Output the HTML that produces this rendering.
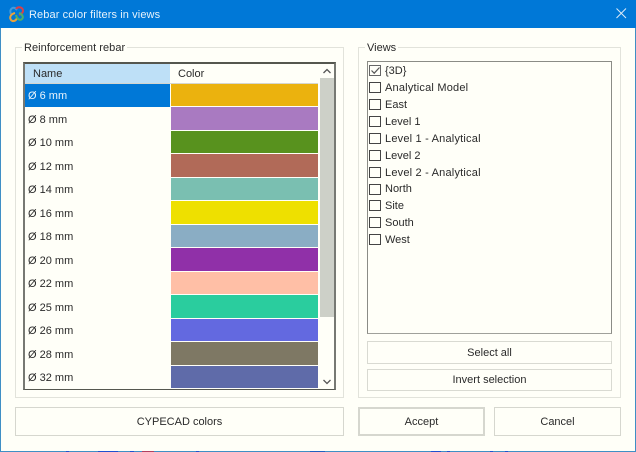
<!DOCTYPE html>
<html>
<head>
<meta charset="utf-8">
<style>
html,body{margin:0;padding:0;}
body{width:636px;height:452px;overflow:hidden;position:relative;background:#FFFFF8;font-family:"Liberation Sans",sans-serif;font-size:11px;color:#2a2a2a;}
.a{position:absolute;box-sizing:border-box;}
.t{position:absolute;white-space:nowrap;line-height:14px;height:14px;}
.btn{position:absolute;box-sizing:border-box;border:1px solid #D9DAD2;text-align:center;background:#FFFFF8;}
.row{position:absolute;left:171px;width:147px;}
.cb{position:absolute;left:369px;width:12px;height:11px;box-sizing:border-box;border:1px solid #444;background:#FFFFF8;}
.r{position:absolute;top:451px;height:1px;}
</style>
</head>
<body>
<div class="a" style="left:0;top:0;width:636px;height:28px;background:#0078D7"></div>
<div class="a" style="left:0;top:28px;width:1px;height:424px;background:#3F8FC5"></div>
<div class="a" style="right:0;top:28px;width:1px;height:424px;background:#3F8FC5"></div>
<div class="a" style="left:0;top:451px;width:636px;height:1px;background:#3F8FC5"></div>
<div class="r" style="left:66px;width:3px;background:#1E50D0"></div>
<div class="r" style="left:98px;width:20px;background:#1E50D0"></div>
<div class="r" style="left:130px;width:4px;background:#1E50D0"></div>
<div class="r" style="left:142px;width:12px;background:#B04060"></div>
<div class="r" style="left:196px;width:3px;background:#1E50D0"></div>
<div class="r" style="left:310px;width:15px;background:#1E60C0"></div>
<div class="r" style="left:431px;width:10px;background:#1E50D0"></div>
<div class="r" style="left:447px;width:3px;background:#1E50D0"></div>
<div class="r" style="left:490px;width:3px;background:#1E50D0"></div>
<div class="r" style="left:505px;width:3px;background:#1E50D0"></div>
<svg class="a" style="left:8px;top:5px" width="17" height="18" viewBox="0 0 17 18" fill="none" stroke-width="2">
<path d="M3 9 C1 5 4 2 7 3 L9 5" stroke="#3F9BE0"/>
<path d="M8 4 C10 1 15 2 15 6 C15 8 13 9 11 10" stroke="#D8404A"/>
<path d="M7 8 C3 9 1 12 3 15 C5 17 8 16 9 13" stroke="#E9A23B"/>
<path d="M8 10 C9 14 12 16 14 14 C16 12 14 9 11 8" stroke="#4CAF6A"/>
</svg>
<div class="t" style="left:29px;top:8px;color:#E6F2FB;font-size:11px;letter-spacing:.1px">Rebar color filters in views</div>
<svg class="a" style="left:616px;top:8px" width="11" height="11" viewBox="0 0 11 11"><path d="M.5.5L10 10M10 .5L.5 10" stroke="#DCEBF7" stroke-width="1"/></svg>

<!-- left group -->
<div class="a" style="left:15px;top:47px;width:329px;height:351px;border:1px solid #E2E3DB"></div>
<div class="t" style="left:22px;top:41px;background:#FFFFF8;padding:0 2px 0 2px;letter-spacing:.05px">Reinforcement rebar</div>
<div class="a" style="left:23px;top:62px;width:313px;height:328px;border:2px solid #777973;border-top-color:#55574F;border-bottom-width:1px;border-bottom-color:#55574F"></div>
<div class="a" style="left:25px;top:64px;width:145px;height:19px;background:#BEE0F7"></div>
<div class="a" style="left:25px;top:83px;width:293px;height:1px;background:#D5D6CF"></div>
<div class="t" style="left:33px;top:67px">Name</div>
<div class="t" style="left:178px;top:67px">Color</div>

<div class="a" style="left:25px;top:84px;width:145px;height:23px;background:#0078D7"></div>
<div class="row" style="top:84px;height:22px;background:#EBB20E"></div>
<div class="row" style="top:107px;height:23px;background:#A97AC1"></div>
<div class="row" style="top:131px;height:22px;background:#58921E"></div>
<div class="row" style="top:154px;height:23px;background:#B16A58"></div>
<div class="row" style="top:178px;height:22px;background:#7ABFB1"></div>
<div class="row" style="top:201px;height:23px;background:#EEE000"></div>
<div class="row" style="top:225px;height:22px;background:#8AADC4"></div>
<div class="row" style="top:248px;height:23px;background:#9030A8"></div>
<div class="row" style="top:272px;height:22px;background:#FFBFA6"></div>
<div class="row" style="top:295px;height:23px;background:#2ACD9E"></div>
<div class="row" style="top:319px;height:22px;background:#6369E0"></div>
<div class="row" style="top:342px;height:23px;background:#7E7864"></div>
<div class="row" style="top:366px;height:22px;background:#5F6BA9"></div>

<div class="t" style="left:28px;top:89px;color:#EAF4FC">Ø 6 mm</div>
<div class="t" style="left:28px;top:113px">Ø 8 mm</div>
<div class="t" style="left:28px;top:136px">Ø 10 mm</div>
<div class="t" style="left:28px;top:160px">Ø 12 mm</div>
<div class="t" style="left:28px;top:183px">Ø 14 mm</div>
<div class="t" style="left:28px;top:207px">Ø 16 mm</div>
<div class="t" style="left:28px;top:230px">Ø 18 mm</div>
<div class="t" style="left:28px;top:254px">Ø 20 mm</div>
<div class="t" style="left:28px;top:277px">Ø 22 mm</div>
<div class="t" style="left:28px;top:301px">Ø 25 mm</div>
<div class="t" style="left:28px;top:324px">Ø 26 mm</div>
<div class="t" style="left:28px;top:348px">Ø 28 mm</div>
<div class="t" style="left:28px;top:371px">Ø 32 mm</div>

<div class="a" style="left:320px;top:78px;width:14px;height:239px;background:#CDD0C8"></div>
<svg class="a" style="left:322px;top:68px" width="10" height="7" viewBox="0 0 10 7"><path d="M1.5 5L5 1.5L8.5 5" fill="none" stroke="#555" stroke-width="1.3"/></svg>
<svg class="a" style="left:322px;top:378px" width="10" height="7" viewBox="0 0 10 7"><path d="M1.5 2L5 5.5L8.5 2" fill="none" stroke="#555" stroke-width="1.3"/></svg>

<!-- right group -->
<div class="a" style="left:358px;top:47px;width:263px;height:351px;border:1px solid #E2E3DB"></div>
<div class="t" style="left:365px;top:41px;background:#FFFFF8;padding:0 2px 0 2px">Views</div>
<div class="a" style="left:367px;top:61px;width:245px;height:273px;border:1px solid #8B8C86;border-bottom:1px solid #A0A19B"></div>

<div class="cb" style="top:65px;border-color:#666"></div>
<svg class="a" style="left:369px;top:64px" width="13" height="13" viewBox="0 0 13 13"><path d="M2.5 6.5L5.2 9.2L10.5 3.5" fill="none" stroke="#555" stroke-width="1.2"/></svg>
<div class="t" style="left:385px;top:64px">{3D}</div>
<div class="cb" style="top:82px"></div><div class="t" style="left:385px;top:81px;letter-spacing:.2px">Analytical Model</div>
<div class="cb" style="top:99px"></div><div class="t" style="left:385px;top:98px">East</div>
<div class="cb" style="top:116px"></div><div class="t" style="left:385px;top:115px">Level 1</div>
<div class="cb" style="top:133px"></div><div class="t" style="left:385px;top:132px;letter-spacing:.2px">Level 1 - Analytical</div>
<div class="cb" style="top:150px"></div><div class="t" style="left:385px;top:149px">Level 2</div>
<div class="cb" style="top:167px"></div><div class="t" style="left:385px;top:166px;letter-spacing:.2px">Level 2 - Analytical</div>
<div class="cb" style="top:184px"></div><div class="t" style="left:385px;top:182px">North</div>
<div class="cb" style="top:200px"></div><div class="t" style="left:385px;top:199px">Site</div>
<div class="cb" style="top:217px"></div><div class="t" style="left:385px;top:216px">South</div>
<div class="cb" style="top:234px"></div><div class="t" style="left:385px;top:233px">West</div>

<div class="btn" style="left:367px;top:341px;width:245px;height:23px;line-height:22px">Select all</div>
<div class="btn" style="left:367px;top:369px;width:245px;height:22px;line-height:21px">Invert selection</div>
<div class="btn" style="left:15px;top:407px;width:329px;height:29px;line-height:28px;border-color:#D6D7CF">CYPECAD colors</div>
<div class="btn" style="left:358px;top:407px;width:127px;height:29px;line-height:26px;border:2px solid #D6D7CF">Accept</div>
<div class="btn" style="left:494px;top:407px;width:127px;height:29px;line-height:28px;border-color:#D6D7CF">Cancel</div>
</body>
</html>
